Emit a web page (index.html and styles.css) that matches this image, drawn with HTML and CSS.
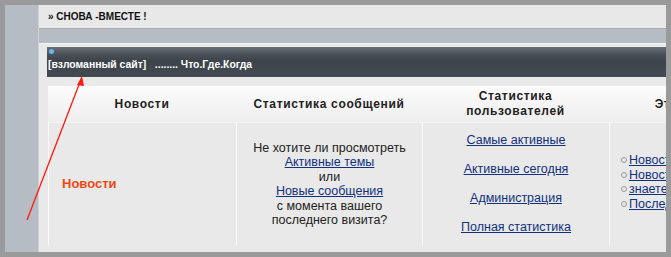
FILE: index.html
```html
<!DOCTYPE html>
<html>
<head>
<meta charset="utf-8">
<link rel="stylesheet" href="styles.css">
</head>
<body>
<div class="frame">
  <div class="side"></div>
  <div class="main">
    <div class="topbox">» СНОВА -ВМЕСТЕ !</div>
    <div class="gap"></div>
    <div class="forum">
      <div class="cathead">
        <span class="dot"></span>
        <div class="cattitle">[взломанный сайт]&nbsp;&nbsp; ........ Что.Где.Когда</div>
      </div>
      <div class="grid">
        <div class="th">Новости</div>
        <div class="th">Статистика сообщений</div>
        <div class="th">Статистика<br>пользователей</div>
        <div class="th">Это интересно</div>

        <div class="td news">Новости</div>
        <div class="td center">
          <div>Не хотите ли просмотреть</div>
          <a href="#">Активные темы</a>
          <div>или</div>
          <a href="#">Новые сообщения</a>
          <div>с момента вашего</div>
          <div>последнего визита?</div>
        </div>
        <div class="td center links">
          <a href="#">Самые активные</a>
          <a href="#">Активные сегодня</a>
          <a href="#">Администрация</a>
          <a href="#">Полная статистика</a>
        </div>
        <div class="td list">
          <div class="li"><span class="ring"></span><a href="#">Новости форума</a></div>
          <div class="li"><span class="ring"></span><a href="#">Новости сайта</a></div>
          <div class="li"><span class="ring"></span><a href="#">знаете ли вы</a></div>
          <div class="li"><span class="ring"></span><a href="#">Последние темы</a></div>
        </div>
      </div>
    </div>
  </div>
</div>
<svg class="arrow" width="671" height="257" viewBox="0 0 671 257">
  <line x1="27" y1="220" x2="80" y2="82" stroke="#ff1a0a" stroke-width="1.3"/>
  <polygon points="82,76 77,85 84,86" fill="#ff1a0a"/>
</svg>
</body>
</html>
```
FILE: styles.css
```css
html, body {
  margin: 0;
  padding: 0;
}
body {
  width: 671px;
  height: 257px;
  overflow: hidden;
  background: #9a9a9a;
  font-family: "Liberation Sans", Arial, sans-serif;
  position: relative;
}
.frame {
  margin: 5px 5px 0 5px;
  width: 661px;
  height: 247px;
  display: flex;
  background: #b5bcc4;
  overflow: hidden;
}
.side {
  width: 33px;
  flex: none;
}
.main {
  width: 627px;
  flex: none;
  display: flex;
  flex-direction: column;
  border-left: 1px solid #d0d3d6;
  overflow: hidden;
}
.topbox {
  height: 24px;
  background: #e8e8e8;
  border-bottom: 1px solid #a8acb0;
  box-sizing: border-box;
  padding-left: 9px;
  font-size: 10px;
  font-weight: bold;
  color: #111;
  line-height: 24px;
}
.gap {
  height: 14px;
}
.forum {
  flex: 1;
  background: #e9e9e9;
  border-top: 1px solid #f4f4f4;
  padding: 3px 0 0 8px;
  overflow: hidden;
}
.cathead {
  height: 30px;
  background: linear-gradient(#6a7078 0px, #474e56 8px, #3c434b 14px, #434a52 100%);
  position: relative;
  box-sizing: border-box;
  padding-top: 11px;
  padding-left: 1px;
}
.dot {
  position: absolute;
  left: 2px;
  top: 2px;
  width: 5px;
  height: 5px;
  border-radius: 50%;
  background: #6ab8f2;
}
.cattitle {
  color: #fff;
  font-size: 10.4px;
  font-weight: bold;
  line-height: 13px;
  white-space: nowrap;
}
.grid {
  margin-top: 9px;
  margin-left: 1px;
  display: grid;
  grid-template-columns: 188px 186px 187px 187px;
  grid-template-rows: 36px 123px;
  width: 748px;
}
.th {
  background: linear-gradient(#fdfdfd 0%, #f6f6f6 40%, #eeeeee 100%);
  display: flex;
  align-items: center;
  justify-content: center;
  text-align: center;
  font-size: 12px;
  font-weight: bold;
  letter-spacing: 0.65px;
  line-height: 15px;
  color: #222;
}
.td {
  border-top: 1px solid #f3f3f3;
  border-left: 1px solid #fafafa;
  display: flex;
  flex-direction: column;
  justify-content: center;
  font-size: 12.5px;
  line-height: 14.5px;
  color: #222;
}
.center {
  align-items: center;
  text-align: center;
}
a {
  color: #11307e;
  text-decoration: underline;
}
.news {
  padding-left: 13px;
  color: #f04812;
  font-weight: bold;
  font-size: 13px;
}
.links {
  gap: 14.5px;
  padding-bottom: 1px;
}
.list {
  padding-left: 11px;
  padding-bottom: 4px;
}
.li {
  display: flex;
  align-items: center;
  white-space: nowrap;
}
.ring {
  width: 4px;
  height: 4px;
  border: 1px solid #999;
  border-radius: 50%;
  margin-right: 2px;
  flex: none;
}
.arrow {
  position: absolute;
  left: 0;
  top: 0;
  pointer-events: none;
}
```
